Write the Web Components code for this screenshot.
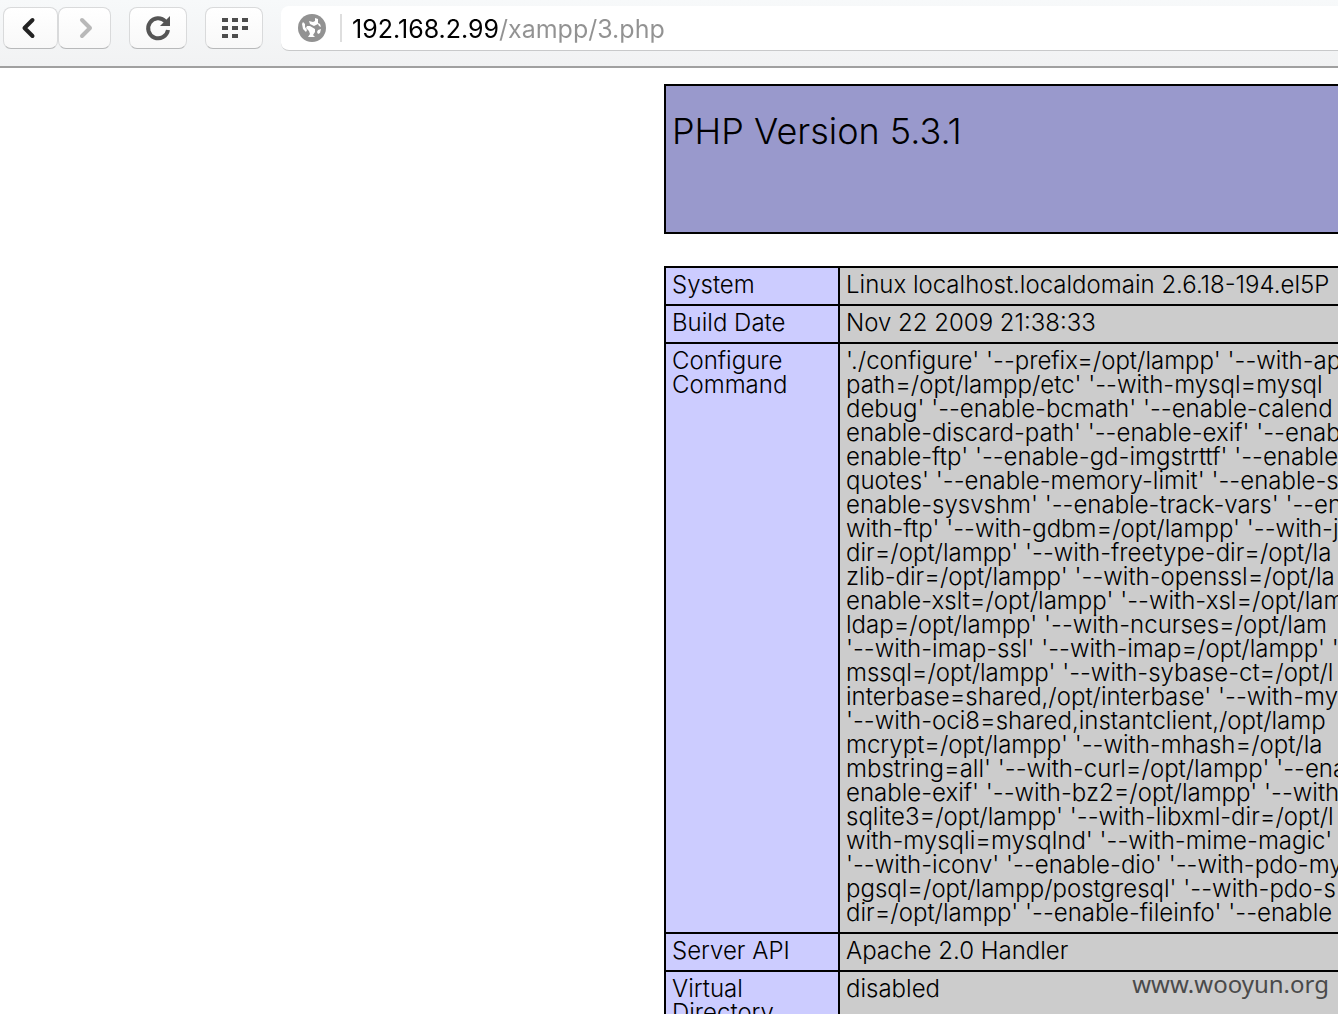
<!DOCTYPE html>
<html lang="en">
<head>
<meta charset="utf-8">
<title>phpinfo()</title>
<style>
body { margin: 0; background: #fff; color: #000; height: 100vh; overflow: hidden; }
</style>
</head>
<body>
<browser-window></browser-window>

<template id="browser-window">
<style>
:host { display: flex; flex-direction: column; height: 100vh; overflow: hidden; }
info-page { flex: 1; min-height: 0; }
site-mark { position: absolute; right: 9px; bottom: 14px; }
</style>
<browser-toolbar></browser-toolbar>
<info-page></info-page>
<site-mark>www.wooyun.org</site-mark>
</template>

<template id="browser-toolbar">
<style>
:host { display: flex; align-items: flex-start; box-sizing: border-box; height: 68px; padding: 6px 0 0 3px; border-bottom: 2px solid #a0a0a0; background: linear-gradient(#f7f9fa, #f1f2f3); }
.pair { display: flex; margin-right: 18px; }
.wide { margin-right: 18px; }
address-bar { flex: 1; min-width: 0; }
</style>
<div class="pair">
<tool-button label="Back" style="--w: 55px"><svg width="30" height="30" viewBox="0 0 30 30"><path d="M16.500 7L8.500 15L16.500 23" fill="none" stroke="#222" stroke-width="4" stroke-linecap="round" stroke-linejoin="round"/></svg></tool-button>
<tool-button label="Forward" style="--w: 53px"><svg width="30" height="30" viewBox="0 0 30 30"><path d="M12 7L20 15L12 23" fill="none" stroke="#b8b8b8" stroke-width="4" stroke-linecap="round" stroke-linejoin="round"/></svg></tool-button>
</div>
<tool-button class="wide" label="Reload" style="--w: 58px"><svg width="30" height="30" viewBox="0 0 30 30"><path d="M25 17A10 10 0 1 1 22.500 8.500" fill="none" stroke="#555" stroke-width="4"/><path d="M27 3V13H17Z" fill="#555"/></svg></tool-button>
<tool-button class="wide" label="Speed dial" style="--w: 58px"><svg width="30" height="30" viewBox="0 0 30 30"><path d="M3 5h6v4H3zM13 5h6v4h-6zM23 5h6v4h-6zM3 13h6v4H3zM13 13h6v4h-6zM23 13h6v4h-6zM3 21h6v4H3zM13 21h6v4h-6z" fill="#4d4d4d"/></svg></tool-button>
<address-bar></address-bar>
</template>

<template id="tool-button">
<style>
:host { display: block; width: var(--w); }
button { display: flex; align-items: center; justify-content: center; box-sizing: border-box; width: 100%; height: 42px; margin: 1px 0 0; padding: 0; border: 1px solid #d9dadb; border-bottom-color: #b8b9ba; border-radius: 8px; background: linear-gradient(#fff, #f8f8f8); }
</style>
<button type="button"><slot></slot></button>
</template>

<template id="address-bar">
<style>
:host { display: block; }
form { display: flex; align-items: center; height: 44px; padding-left: 17px; border-bottom: 1px solid #c8c9ca; border-radius: 8px 0 0 8px; background: #fff; }
svg { flex: none; }
label { display: flex; align-items: center; padding-right: 14px; border-right: 2px solid #dedede; height: 28px; }
input { flex: 1; min-width: 0; height: 42px; margin: 0; padding: 2px 0 0 10px; box-sizing: border-box; border: 0; outline: 0; font: 400 25px/40px Inter, sans-serif; background: linear-gradient(90deg, #000 157px, #929292 157px); -webkit-background-clip: text; background-clip: text; -webkit-text-fill-color: transparent; }
</style>
<form>
<label for="url" aria-label="Address"><svg width="28" height="28" viewBox="0 0 28 28"><circle cx="14" cy="14" r="14" fill="#929292"/><path d="M4 10L5 15L8 18L9 16L7 13L7 10L5 8ZM9 12L12 12L17 15L17 18L15 21L17 23L10 23L12 20L11 17L8 14ZM11 7L15 8L17 7L17 4L20 5L20 9L22 10L23 13L21 12L20 10L18 11L16 12L12 10ZM20 16L23 15L22 19L20 20L19 18Z" fill="#fff"/></svg></label>
<input id="url" type="text" value="192.168.2.99/xampp/3.php" spellcheck="false">
</form>
</template>

<template id="site-mark">
<style>
:host { display: block; font: 400 24px/32px "Noto Sans", sans-serif; color: #4a4a4a; }
</style>
<slot></slot>
</template>

<template id="info-page">
<style>
:host { display: block; overflow: hidden; padding: 16px 0 0 664px; font-family: Inter, sans-serif; }
table { width: 1200px; border-collapse: collapse; table-layout: fixed; margin-bottom: 32px; }
th, td { border: 2px solid #000; padding: 5px 6px 7px; font-size: 24px; line-height: 24px; font-weight: 300; text-align: left; vertical-align: top; white-space: nowrap; }
.title th { height: 136px; padding: 0 6px; background: #9999cc; }
.title tr { height: 148px; }
h1 { margin: 23px 0 0; font-size: 36px; line-height: 44px; font-weight: 300; }
col.name { width: 174px; }
th { background: #ccccff; white-space: normal; }
td { background: #cccccc; }
</style>
<table class="title"><tbody><tr><th><h1>PHP Version 5.3.1</h1></th></tr></tbody></table>
<table>
<colgroup><col class="name"><col></colgroup>
<tbody>
<tr><th scope="row">System</th><td>Linux localhost.localdomain 2.6.18-194.el5P</td></tr>
<tr><th scope="row">Build Date</th><td>Nov 22 2009 21:38:33</td></tr>
<tr><th scope="row">Configure Command</th><td>'./configure' '--prefix=/opt/lampp' '--with-ap<br>path=/opt/lampp/etc' '--with-mysql=mysql<br>debug' '--enable-bcmath' '--enable-calend<br>enable-discard-path' '--enable-exif' '--enab<br>enable-ftp' '--enable-gd-imgstrttf' '--enable<br>quotes' '--enable-memory-limit' '--enable-sh<br>enable-sysvshm' '--enable-track-vars' '--ena<br>with-ftp' '--with-gdbm=/opt/lampp' '--with-jp<br>dir=/opt/lampp' '--with-freetype-dir=/opt/la<br>zlib-dir=/opt/lampp' '--with-openssl=/opt/la<br>enable-xslt=/opt/lampp' '--with-xsl=/opt/lam<br>ldap=/opt/lampp' '--with-ncurses=/opt/lam<br>'--with-imap-ssl' '--with-imap=/opt/lampp' '--<br>mssql=/opt/lampp' '--with-sybase-ct=/opt/l<br>interbase=shared,/opt/interbase' '--with-my<br>'--with-oci8=shared,instantclient,/opt/lamp<br>mcrypt=/opt/lampp' '--with-mhash=/opt/la<br>mbstring=all' '--with-curl=/opt/lampp' '--ena<br>enable-exif' '--with-bz2=/opt/lampp' '--with-<br>sqlite3=/opt/lampp' '--with-libxml-dir=/opt/l<br>with-mysqli=mysqlnd' '--with-mime-magic' '--<br>'--with-iconv' '--enable-dio' '--with-pdo-mysq<br>pgsql=/opt/lampp/postgresql' '--with-pdo-s<br>dir=/opt/lampp' '--enable-fileinfo' '--enable</td></tr>
<tr><th scope="row">Server API</th><td>Apache 2.0 Handler</td></tr>
<tr><th scope="row">Virtual Directory</th><td>disabled</td></tr>
</tbody>
</table>
</template>

<script>
class TemplateElement extends HTMLElement {
  constructor() {
    super();
    const template = document.getElementById(this.localName);
    this.attachShadow({ mode: "open" }).append(template.content.cloneNode(true));
  }
}
class ToolButton extends TemplateElement {
  connectedCallback() {
    this.shadowRoot.querySelector("button").setAttribute("aria-label", this.getAttribute("label"));
  }
}
customElements.define("tool-button", ToolButton);
for (const name of ["address-bar", "browser-toolbar", "site-mark", "info-page", "browser-window"]) {
  customElements.define(name, class extends TemplateElement {});
}
</script>
</body>
</html>
